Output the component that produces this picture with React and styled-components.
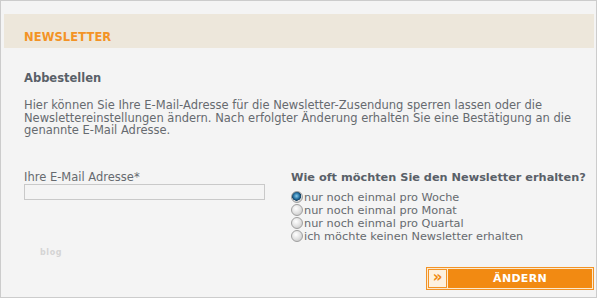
import React from "react";
import styled, { createGlobalStyle } from "styled-components";

const Global = createGlobalStyle`
  html, body { margin: 0; padding: 0; background: #ffffff; }
  body { font-family: "DejaVu Sans", Verdana, sans-serif; }
  * { box-sizing: border-box; }
`;

const Frame = styled.div`
  width: 597px;
  height: 298px;
  border: 1px solid #cccccc;
  background: #f4f4f4;
  padding: 13px 2px 0 3px;
  display: flex;
  flex-direction: column;
`;

const Header = styled.div`
  height: 34px;
  background: #ede7db;
  padding: 16px 0 0 20px;
`;

const HeaderTitle = styled.h1`
  margin: 0;
  font-size: 11.5px;
  line-height: 14px;
  font-weight: bold;
  letter-spacing: 0.1px;
  color: #f39325;
`;

const Content = styled.div`
  padding: 0 0 0 20px;
  display: flex;
  flex-direction: column;
`;

const SubTitle = styled.h2`
  margin: 24px 0 0;
  font-size: 11.5px;
  line-height: 13px;
  font-weight: bold;
  color: #596068;
`;

const Intro = styled.p`
  margin: 14px 0 0;
  font-size: 11.5px;
  line-height: 12.5px;
  color: #666a6f;
  width: 562px;
`;

const FormGrid = styled.div`
  margin-top: 33px;
  display: grid;
  grid-template-columns: 267px 1fr;
`;

const LeftCol = styled.div`
  display: flex;
  flex-direction: column;
`;

const RightCol = styled.div`
  display: flex;
  flex-direction: column;
`;

const Label = styled.label`
  margin-top: 1px;
  font-size: 11.5px;
  line-height: 13px;
  color: #666a6f;
`;

const TextInput = styled.input`
  width: 241px;
  height: 16px;
  margin: 0;
  border: 1px solid #c9c9c9;
  background: #f4f4f4;
  padding: 0 3px;
  outline: none;
  font-family: inherit;
  font-size: 11px;
`;

const Mark = styled.span`
  margin: 48px 0 0 16px;
  font-size: 8px;
  line-height: 9px;
  font-weight: bold;
  letter-spacing: 0.6px;
  color: #d4d4d4;
`;

const Question = styled.h3`
  margin: 1px 0 0;
  font-size: 11.3px;
  line-height: 13px;
  font-weight: bold;
  color: #596068;
  white-space: nowrap;
`;

const Options = styled.div`
  margin-top: 7px;
  display: flex;
  flex-direction: column;
`;

const Option = styled.label`
  display: flex;
  align-items: center;
  height: 13px;
  font-size: 11.3px;
  line-height: 13px;
  color: #666a6f;
  white-space: nowrap;
`;

const Radio = styled.input.attrs({ type: "radio" })`
  appearance: none;
  -webkit-appearance: none;
  width: 12px;
  height: 12px;
  margin: 0 1px 0 0;
  border-radius: 50%;
  border: 1px solid #a0a0a0;
  background: radial-gradient(circle at 40% 35%, #ffffff 0%, #e2e2e2 50%, #bdbdbd 100%);
  flex-shrink: 0;
  &:checked {
    background:
      radial-gradient(circle at 45% 40%, #8ccbea 0%, #2a77a8 35%, #123d5e 55%, transparent 60%),
      radial-gradient(circle at 40% 35%, #ffffff 0%, #e2e2e2 50%, #bdbdbd 100%);
  }
`;

const ButtonRow = styled.div`
  display: flex;
  justify-content: flex-end;
  margin-top: 24px;
`;

const Button = styled.button`
  width: 168px;
  height: 23px;
  padding: 1px;
  border: 1px solid #f39325;
  background: #fbe9cf;
  display: flex;
  gap: 1px;
  cursor: pointer;
  font-family: inherit;
`;

const ButtonIcon = styled.span`
  width: 19px;
  height: 19px;
  border: 1px solid #f39325;
  background: #fdf1df;
  color: #f08a10;
  font-size: 15px;
  font-weight: bold;
  line-height: 15px;
  display: flex;
  align-items: center;
  justify-content: center;
  padding-bottom: 2px;
`;

const ButtonLabel = styled.span`
  flex: 1;
  height: 19px;
  background: #f28a12;
  color: #ffffff;
  font-size: 11px;
  font-weight: bold;
  letter-spacing: 0.3px;
  line-height: 19px;
  text-align: center;
`;

const options = [
  "nur noch einmal pro Woche",
  "nur noch einmal pro Monat",
  "nur noch einmal pro Quartal",
  "ich möchte keinen Newsletter erhalten",
];

export default function App() {
  return (
    <>
      <Global />
      <Frame>
        <Header>
          <HeaderTitle>NEWSLETTER</HeaderTitle>
        </Header>
        <Content>
          <SubTitle>Abbestellen</SubTitle>
          <Intro>
            Hier können Sie Ihre E-Mail-Adresse für die Newsletter-Zusendung sperren lassen oder die
            Newslettereinstellungen ändern. Nach erfolgter Änderung erhalten Sie eine Bestätigung an die
            genannte E-Mail Adresse.
          </Intro>
          <FormGrid>
            <LeftCol>
              <Label htmlFor="email">Ihre E-Mail Adresse*</Label>
              <TextInput id="email" type="text" />
              <Mark>blog</Mark>
            </LeftCol>
            <RightCol>
              <Question>Wie oft möchten Sie den Newsletter erhalten?</Question>
              <Options>
                {options.map((o, i) => (
                  <Option key={o}>
                    <Radio name="freq" defaultChecked={i === 0} />
                    {o}
                  </Option>
                ))}
              </Options>
              <ButtonRow>
                <Button type="button">
                  <ButtonIcon>»</ButtonIcon>
                  <ButtonLabel>ÄNDERN</ButtonLabel>
                </Button>
              </ButtonRow>
            </RightCol>
          </FormGrid>
        </Content>
      </Frame>
    </>
  );
}
